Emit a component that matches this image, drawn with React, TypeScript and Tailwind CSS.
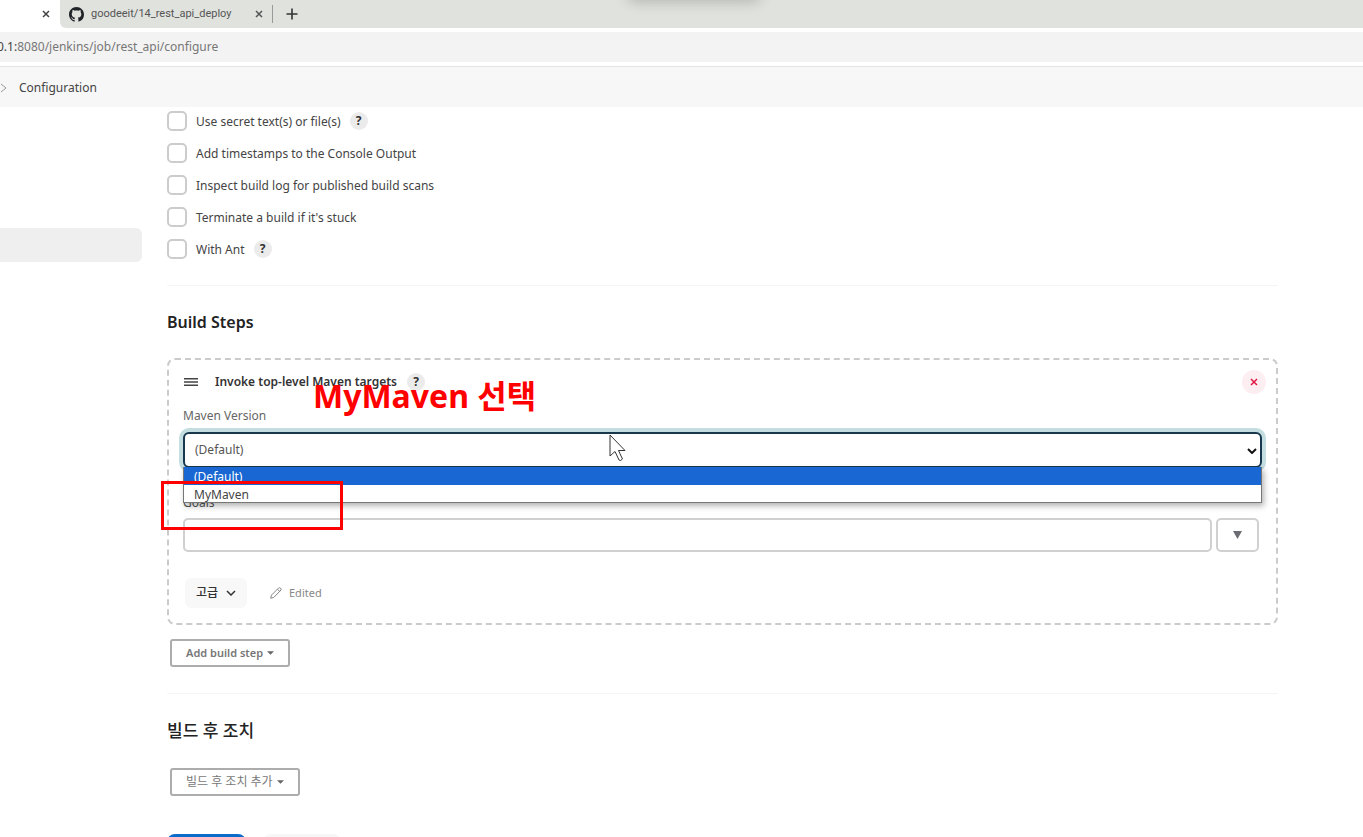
import type { ReactNode } from "react";

const ENV_OPTIONS = [
  { id: "secret", label: "Use secret text(s) or file(s)", help: true },
  { id: "timestamps", label: "Add timestamps to the Console Output", help: false },
  { id: "scans", label: "Inspect build log for published build scans", help: false },
  { id: "stuck", label: "Terminate a build if it's stuck", help: false },
  { id: "ant", label: "With Ant", help: true },
];

function CloseIcon({ className }: { className: string }) {
  return (
    <svg className={className} viewBox="0 0 8 8" fill="none" stroke="currentColor" strokeWidth="1.5">
      <path d="M1 1l6 6M7 1L1 7" />
    </svg>
  );
}

function GithubMark() {
  return (
    <svg className="h-[15px] w-[15px] shrink-0" viewBox="0 0 16 16" fill="#202428" aria-hidden="true">
      <path d="M8 0C3.58 0 0 3.58 0 8c0 3.54 2.29 6.53 5.47 7.59.4.07.55-.17.55-.38 0-.19-.01-.82-.01-1.49-2.01.37-2.53-.49-2.69-.94-.09-.23-.48-.94-.82-1.13-.28-.15-.68-.52-.01-.53.63-.01 1.08.58 1.23.82.72 1.21 1.87.87 2.33.66.07-.52.28-.87.51-1.07-1.78-.2-3.64-.89-3.64-3.95 0-.87.31-1.59.82-2.15-.08-.2-.36-1.02.08-2.12 0 0 .67-.21 2.2.82.64-.18 1.32-.27 2-.27s1.36.09 2 .27c1.53-1.04 2.2-.82 2.2-.82.44 1.1.16 1.92.08 2.12.51.56.82 1.27.82 2.15 0 3.07-1.87 3.75-3.65 3.95.29.25.54.73.54 1.48 0 1.07-.01 1.93-.01 2.2 0 .21.15.46.55.38A8.01 8.01 0 0 0 16 8c0-4.42-3.58-8-8-8z" />
    </svg>
  );
}

function HelpButton() {
  return (
    <button
      type="button"
      className="flex h-[18px] w-[18px] items-center justify-center rounded-full bg-[#ebebeb] text-xs font-bold text-[#333]"
    >
      ?
    </button>
  );
}

function MenuButton({ children }: { children: ReactNode }) {
  return (
    <button
      type="button"
      className="ml-[3px] flex h-7 items-center gap-1 rounded-[3px] border-2 border-[#acacac] px-3.5 text-xs text-[#777]"
    >
      {children}
      <svg className="h-1 w-[7px]" viewBox="0 0 8 4" fill="#666" aria-hidden="true">
        <path d="M0 0h8L4 4z" />
      </svg>
    </button>
  );
}

function BrowserChrome() {
  return (
    <header className="shrink-0">
      <div className="relative flex h-7 bg-white">
        <div className="flex w-[60px] shrink-0 items-center justify-end bg-white pr-2.5 text-[#444]">
          <button type="button" aria-label="Close tab">
            <CloseIcon className="h-2 w-2" />
          </button>
        </div>
        <div className="flex flex-1 rounded-bl-md bg-[#e0e2de]">
          <div className="flex w-[213px] items-center pl-[9px] text-[#555]">
            <GithubMark />
            <span className="ml-[7px] flex-1 font-['Roboto'] text-[11px]">goodeeit/14_rest_api_deploy</span>
            <button type="button" aria-label="Close tab">
              <CloseIcon className="h-2 w-2" />
            </button>
            <span className="ml-[9px] h-[18px] border-r border-[#999]" />
          </div>
          <button type="button" aria-label="New tab" className="ml-[13px] text-[#333]">
            <svg className="h-3 w-3" viewBox="0 0 12 12" stroke="currentColor" strokeWidth="1.6">
              <path d="M6 0.5v11M0.5 6h11" />
            </svg>
          </button>
        </div>
        <div className="pointer-events-none absolute inset-0 overflow-hidden">
          <div className="mx-auto -mt-4 h-4 w-[134px] translate-x-3 rounded-full shadow-[0_2px_14px_rgba(0,0,0,0.2)]" />
        </div>
      </div>
      <div className="mt-1 flex h-[30px] items-center bg-[#f3f3f3] text-xs text-[#777]">
        <span className="-ml-[3px] text-[#444]">0.1:</span>8080/jenkins/job/rest_api/configure
      </div>
      <nav className="mt-1 flex h-[41px] items-center gap-3 border-t border-[#e3e3e3] bg-[#f7f7f7] pt-px text-xs text-[#444]">
        <svg className="h-2.5 w-[7px]" viewBox="0 0 7 10" fill="none" stroke="#999" aria-hidden="true">
          <path d="M1 1l5 4-5 4" />
        </svg>
        <a href="#configuration">Configuration</a>
      </nav>
    </header>
  );
}

function MavenStep() {
  return (
    <section className="relative mt-6 rounded-lg border-2 border-dashed border-[#cbcbcb] px-3.5 pt-2.5 pb-[15px]">
      <div className="flex h-6 items-center">
        <svg className="ml-px h-2 w-[14px]" viewBox="0 0 14 8" fill="#444" aria-hidden="true">
          <path d="M0 0h14v1.5H0zM0 3.25h14v1.5H0zM0 6.5h14V8H0z" />
        </svg>
        <h3 className="ml-[17px] text-xs font-semibold text-[#333]">Invoke top-level Maven targets</h3>
        <div className="ml-2.5">
          <HelpButton />
        </div>
        <button
          type="button"
          aria-label="Delete"
          className="-mr-1 ml-auto flex h-6 w-6 items-center justify-center rounded-full bg-[#fdeef1] text-[#e01845]"
        >
          <CloseIcon className="h-2 w-2" />
        </button>
      </div>

      <label htmlFor="maven" className="mt-3 block text-xs leading-5 text-[#666]">
        Maven Version
      </label>
      <div className="relative mt-1.5">
        <select
          id="maven"
          className="block h-9 w-full appearance-none rounded-md border-2 border-[#17384d] bg-white px-2.5 text-xs text-[#555] ring-4 ring-[#c3dde0] outline-none"
        >
          <option>(Default)</option>
          <option>MyMaven</option>
        </select>
        <svg
          className="absolute top-4 right-[5px] h-1.5 w-2.5"
          viewBox="0 0 10 6"
          fill="none"
          stroke="#111"
          strokeWidth="2"
          aria-hidden="true"
        >
          <path d="M1 1l4 4 4-4" />
        </svg>
        <ul
          role="listbox"
          className="absolute top-full right-0 left-0 z-10 -mt-px border border-t-0 border-[#777] bg-white text-xs leading-5 text-[#444] shadow-[2px_3px_6px_rgba(0,0,0,0.3)]"
        >
          <li role="option" aria-selected="true" className="h-[18px] overflow-hidden bg-[#1967d2] px-2.5 text-white">
            (Default)
          </li>
          <li role="option" aria-selected="false" className="h-[17px] px-2.5">
            MyMaven
          </li>
        </ul>
        {/* mouse pointer */}
        <svg className="absolute top-0.5 left-[426px] z-20 h-7 w-[18px]" viewBox="0 0 18 28" aria-hidden="true">
          <path d="M1 1v21l5-4.5 4 8.5q1.5 1.5 3.5-1l-4-8.5H16z" fill="#fff" stroke="#333" />
        </svg>
      </div>

      <label htmlFor="goals" className="mt-[25px] block text-xs leading-5 text-[#555]">
        Goals
      </label>
      <div className="mt-[5px] mr-[3px] flex gap-1">
        <input
          id="goals"
          type="text"
          className="h-[34px] min-w-0 flex-1 rounded-[5px] border-2 border-[#d0d0d0] bg-white px-2.5 text-xs"
        />
        <button
          type="button"
          aria-label="Expand goals"
          className="flex h-[34px] w-[43px] items-center justify-center rounded-[5px] border-2 border-[#d0d0d0]"
        >
          <svg className="h-2 w-[9px]" viewBox="0 0 9 8" fill="#6c6c74" aria-hidden="true">
            <path d="M0 0h9L4.5 8z" />
          </svg>
        </button>
      </div>

      <div className="mt-[26px] flex items-center">
        <button
          type="button"
          className="ml-0.5 flex h-[30px] w-[62px] items-center justify-center gap-2 rounded-md bg-[#f8f8f8] text-xs font-medium text-[#333]"
        >
          고급
          <svg className="h-1.5 w-2.5" viewBox="0 0 10 6" fill="none" stroke="#333" strokeWidth="1.5" aria-hidden="true">
            <path d="M1 1l4 4 4-4" />
          </svg>
        </button>
        <span className="ml-[23px] flex items-center gap-[7px] text-[11px] text-[#888]">
          <svg className="h-3 w-3" viewBox="0 0 12 12" fill="none" stroke="#888" aria-hidden="true">
            <path d="M.7 11.3l.8-3.2L8.7.9q1-.7 1.9.2.9.9.4 1.9L3.8 10.4z" />
            <path d="M7.5 2.2l2.3 2.3" />
          </svg>
          Edited
        </span>
      </div>

      {/* annotations over the form */}
      <p className="absolute top-4 left-36 z-20 text-[32px] leading-10 font-bold whitespace-nowrap text-[#f00]">
        MyMaven 선택
      </p>
      <div className="absolute top-[121px] -left-2 z-20 h-[49px] w-[182px] border-[3px] border-[#f00]" />
    </section>
  );
}

export default function App() {
  return (
    <div className="flex h-screen flex-col overflow-hidden bg-white font-['Noto_Sans','Noto_Sans_CJK_KR',sans-serif]">
      <BrowserChrome />
      <div className="flex min-h-0 flex-1">
        <aside className="w-[142px] shrink-0 pt-[121px]">
          <div className="h-[34px] rounded-r-md bg-[#efefef]" />
        </aside>
        <main className="mr-[85px] ml-[25px] min-w-0 flex-1 pt-1">
          <div className="flex flex-col gap-3">
            {ENV_OPTIONS.map((option) => (
              <div key={option.id} className="flex h-5 items-center">
                <input
                  id={option.id}
                  type="checkbox"
                  className="h-5 w-5 appearance-none rounded-[5px] border-2 border-[#ccc] bg-white"
                />
                <label htmlFor={option.id} className="mr-[9px] ml-[9px] pt-px text-xs text-[#444]">
                  {option.label}
                </label>
                {option.help && <HelpButton />}
              </div>
            ))}
          </div>

          <hr className="mt-[26px] border-[#f5f5f5]" />
          <h2 className="mt-6 text-base leading-6 font-semibold text-[#222]">Build Steps</h2>
          <MavenStep />
          <div className="mt-3.5">
            <MenuButton>
              <span className="text-[11px] font-semibold">Add build step</span>
            </MenuButton>
          </div>

          <hr className="mt-[26px] border-[#f5f5f5]" />
          <h2 className="mt-[25px] text-[17px] leading-6 font-medium text-[#222]">빌드 후 조치</h2>
          <div className="mt-[25px]">
            <MenuButton>빌드 후 조치 추가</MenuButton>
          </div>

          <div className="mt-[38px] flex gap-[17px]">
            <button type="button" aria-label="Save" className="h-9 w-[79px] shrink-0 rounded-lg bg-[#0b6bcb]" />
            <button type="button" aria-label="Apply" className="h-9 w-[78px] shrink-0 rounded-lg bg-[#f7f7f7]" />
          </div>
        </main>
      </div>
    </div>
  );
}
